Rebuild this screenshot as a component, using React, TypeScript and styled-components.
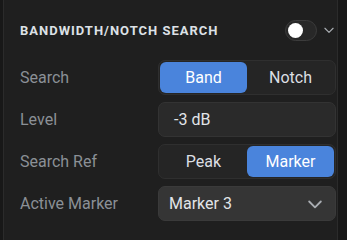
import React, { useState } from "react";
import styled, { createGlobalStyle } from "styled-components";

const GlobalStyle = createGlobalStyle`
  html, body {
    margin: 0;
    padding: 0;
    background: #181818;
  }
  body {
    font-family: Roboto, "Noto Sans", sans-serif;
  }
`;

const Page = styled.div`
  width: 347px;
  height: 240px;
  background: #181818;
  padding-left: 3px;
  box-sizing: border-box;
`;

const Panel = styled.section`
  width: 335px;
  height: 240px;
  box-sizing: border-box;
  background: #1f1f1f;
  border-left: 1px solid #2b2b2b;
  border-right: 1px solid #2b2b2b;
  padding: 0 0 0 16px;
`;

const Header = styled.div`
  height: 60px;
  display: flex;
  align-items: center;
  padding-right: 1px;
`;

const Title = styled.h2`
  flex: 1;
  margin: 0;
  padding-top: 1px;
  font-size: 13px;
  font-weight: 700;
  letter-spacing: 1px;
  color: #dde1e6;
`;

const Track = styled.button<{ $on: boolean }>`
  width: 32px;
  height: 21px;
  box-sizing: border-box;
  border-radius: 11px;
  border: 1px solid #3c3c3c;
  background: ${(p) => (p.$on ? "#4a84dc" : "#282828")};
  padding: 0 2px;
  display: flex;
  align-items: center;
  justify-content: ${(p) => (p.$on ? "flex-end" : "flex-start")};
  cursor: pointer;
`;

const Knob = styled.span`
  width: 15px;
  height: 15px;
  border-radius: 50%;
  background: #ffffff;
`;

const Caret = styled.span<{ $gap?: number }>`
  display: flex;
  margin-left: ${(p) => p.$gap ?? 0}px;
  color: #a9adb2;
`;

const Rows = styled.div`
  display: flex;
  flex-direction: column;
  gap: 7px;
`;

const Row = styled.div`
  display: grid;
  grid-template-columns: 138px 178px;
  align-items: center;
`;

const Label = styled.span`
  font-size: 16px;
  color: #8b9096;
`;

const Segmented = styled.div`
  height: 35px;
  box-sizing: border-box;
  display: grid;
  grid-template-columns: 1fr 1fr;
  padding: 1px;
  border: 1px solid #2f2f2f;
  border-radius: 7px;
  background: #252525;
`;

const Segment = styled.button<{ $active: boolean }>`
  border: none;
  border-radius: 6px;
  font-family: inherit;
  font-size: 16px;
  color: ${(p) => (p.$active ? "#ffffff" : "#dcdfe3")};
  background: ${(p) => (p.$active ? "#4a84dc" : "transparent")};
  cursor: pointer;
`;

const Field = styled.div<{ $select?: boolean }>`
  height: 35px;
  box-sizing: border-box;
  display: flex;
  align-items: center;
  justify-content: space-between;
  padding: ${(p) => (p.$select ? "0 10px 0 10px" : "0 10px 0 15px")};
  border: 1px solid ${(p) => (p.$select ? "#3a3a3a" : "#333333")};
  border-radius: 7px;
  background: ${(p) => (p.$select ? "#353535" : "#2a2a2a")};
  font-size: 16px;
  color: #e2e5e9;
`;

function Chevron({ size, stroke }: { size: number; stroke: number }) {
  return (
    <svg width={size} height={size} viewBox="0 0 24 24" fill="none">
      <path
        d="M5 9l7 7 7-7"
        stroke="currentColor"
        strokeWidth={stroke}
        strokeLinecap="round"
        strokeLinejoin="round"
      />
    </svg>
  );
}

export default function App() {
  const [enabled, setEnabled] = useState(false);
  const [search, setSearch] = useState("Band");
  const [ref, setRef] = useState("Marker");

  return (
    <Page>
      <GlobalStyle />
      <Panel>
        <Header>
          <Title>BANDWIDTH/NOTCH SEARCH</Title>
          <Track $on={enabled} onClick={() => setEnabled(!enabled)}>
            <Knob />
          </Track>
          <Caret $gap={5}>
            <Chevron size={14} stroke={2} />
          </Caret>
        </Header>
        <Rows>
          <Row>
            <Label>Search</Label>
            <Segmented>
              {["Band", "Notch"].map((o) => (
                <Segment key={o} $active={search === o} onClick={() => setSearch(o)}>
                  {o}
                </Segment>
              ))}
            </Segmented>
          </Row>
          <Row>
            <Label>Level</Label>
            <Field>-3 dB</Field>
          </Row>
          <Row>
            <Label>Search Ref</Label>
            <Segmented>
              {["Peak", "Marker"].map((o) => (
                <Segment key={o} $active={ref === o} onClick={() => setRef(o)}>
                  {o}
                </Segment>
              ))}
            </Segmented>
          </Row>
          <Row>
            <Label>Active Marker</Label>
            <Field $select>
              Marker 3
              <Caret>
                <Chevron size={20} stroke={2.2} />
              </Caret>
            </Field>
          </Row>
        </Rows>
      </Panel>
    </Page>
  );
}
